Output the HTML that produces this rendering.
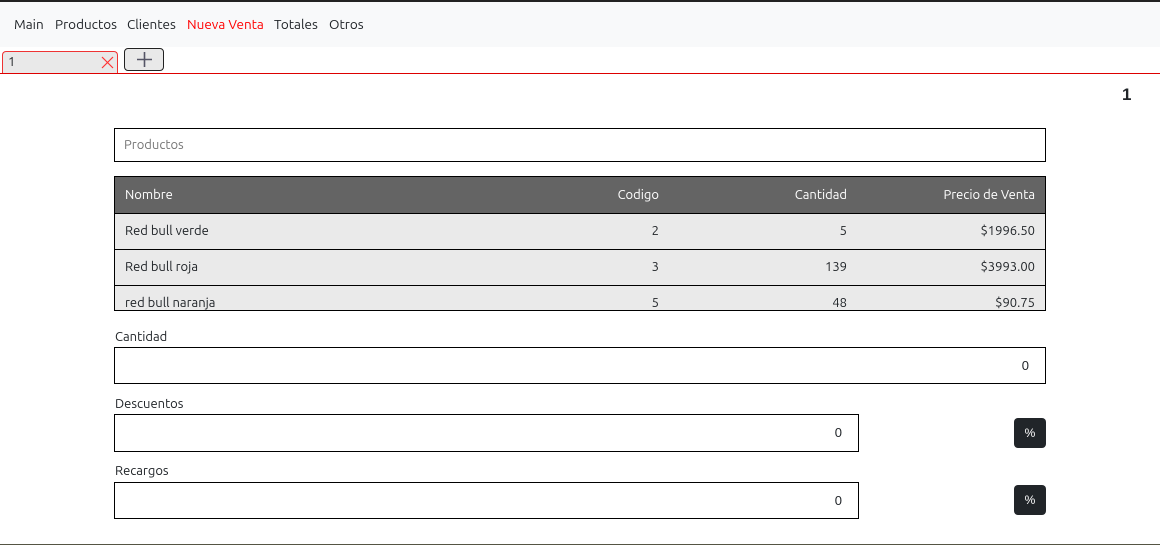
<!DOCTYPE html>
<html><head><meta charset="utf-8"><style>
*{box-sizing:border-box;margin:0;padding:0}
body{width:1160px;height:545px;position:relative;overflow:hidden;background:#fff;font-family:"Ubuntu","Liberation Sans","DejaVu Sans",sans-serif;font-size:13px;color:#212529}
.a{position:absolute}
.nav{left:0;top:0;width:1160px;height:47px;background:#f8f9fa;border-top:2px solid #222}
.nav span{position:absolute;top:14px;font-size:13.5px}
.box{border:1.5px solid #000;background:#fff}
table{border-collapse:collapse;width:100%;table-layout:fixed}
td,th{height:36px;padding:0 10px;font-weight:normal;font-size:13px;border-bottom:1.5px solid #000}
th{background:#646464;color:#fff}
td{background:#eaeaea}
.r{text-align:right}
.btn{background:#212529;color:#fff;border-radius:4px;width:32px;height:30px;text-align:center;line-height:30px;font-size:12px;font-family:"Liberation Sans",sans-serif}
.val{font-family:"Liberation Sans",sans-serif;font-size:13px;text-align:right}
</style></head><body>
<div class="a nav">
<span style="left:14px">Main</span>
<span style="left:55px">Productos</span>
<span style="left:127px">Clientes</span>
<span style="left:187px;color:#f00">Nueva Venta</span>
<span style="left:274px">Totales</span>
<span style="left:329px">Otros</span>
</div>
<div class="a" style="left:2px;top:51px;width:116px;height:23px;background:#e9e9e9;border:1px solid #e33;border-bottom:none;border-radius:4px 4px 0 0"><span class="a" style="left:5px;top:3px;font-size:13px">1</span>
<svg class="a" style="left:98px;top:4px" width="13" height="13" viewBox="0 0 13 13"><path d="M1 1L12 12M12 1L1 12" stroke="#f33" stroke-width="1.2"/></svg></div>
<div class="a" style="left:124px;top:48px;width:40px;height:23px;background:#e9e9e9;border:1.5px solid #222;border-radius:4px">
<svg class="a" style="left:12px;top:3px" width="15" height="15" viewBox="0 0 15 15"><path d="M7.5 0V15M0 7.5H15" stroke="#556" stroke-width="1.6"/></svg></div>
<div class="a" style="left:0;top:73px;width:1160px;height:1px;background:#d00"></div>
<div class="a" style="left:1122px;top:85px;font-family:'Liberation Sans',sans-serif;font-weight:bold;font-size:17px">1</div>
<div class="a box" style="left:114px;top:128px;width:932px;height:34px"><span class="a" style="left:9px;top:9px;color:#777">Productos</span></div>
<div class="a" style="left:114px;top:176px;width:932px;height:135px;border:1.5px solid #000;overflow:hidden">
<table>
<colgroup><col style="width:444px"><col style="width:110px"><col style="width:188px"><col></colgroup>
<tr><th style="text-align:left">Nombre</th><th class="r">Codigo</th><th class="r">Cantidad</th><th class="r">Precio de Venta</th></tr>
<tr><td>Red bull verde</td><td class="r">2</td><td class="r">5</td><td class="r">$1996.50</td></tr>
<tr><td>Red bull roja</td><td class="r">3</td><td class="r">139</td><td class="r">$3993.00</td></tr>
<tr><td>red bull naranja</td><td class="r">5</td><td class="r">48</td><td class="r">$90.75</td></tr>
</table></div>
<div class="a" style="left:115px;top:330px">Cantidad</div>
<div class="a box val" style="left:114px;top:347px;width:932px;height:37px;padding:10px 16px">0</div>
<div class="a" style="left:115px;top:397px">Descuentos</div>
<div class="a box val" style="left:114px;top:414px;width:745px;height:38px;padding:10px 16px">0</div>
<div class="a btn" style="left:1014px;top:418px">%</div>
<div class="a" style="left:115px;top:464px">Recargos</div>
<div class="a box val" style="left:114px;top:482px;width:745px;height:37px;padding:10px 16px">0</div>
<div class="a btn" style="left:1014px;top:485px">%</div>
<div class="a" style="left:0;top:544px;width:1160px;height:1px;background:#554"></div>
</body></html>
